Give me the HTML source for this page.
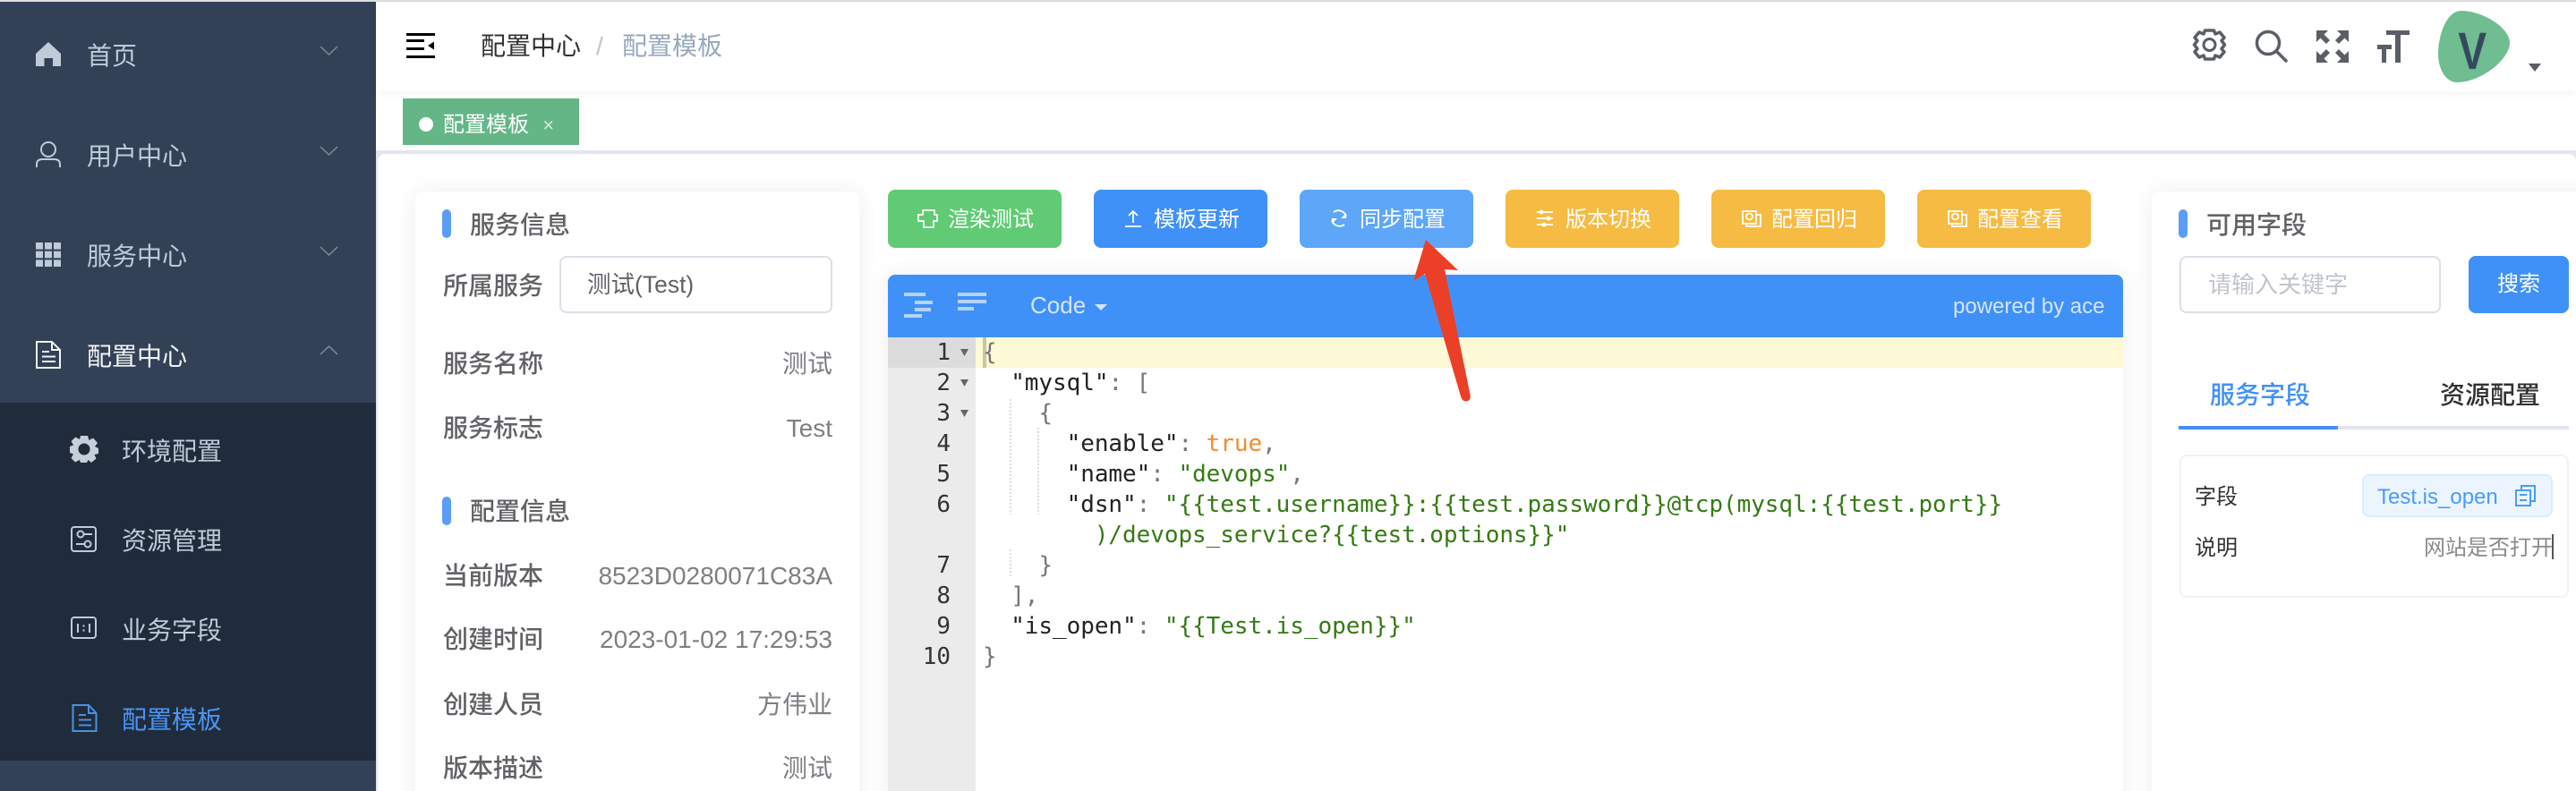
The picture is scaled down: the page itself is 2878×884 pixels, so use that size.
<!DOCTYPE html>
<html lang="zh">
<head>
<meta charset="utf-8">
<title>配置模板</title>
<style>
html,body{margin:0;padding:0;width:2878px;height:884px;overflow:hidden;background:#fff}
body{position:relative;font-family:"Liberation Sans","Noto Sans CJK SC",sans-serif;font-size:28px;color:#606266}
div,span.t{position:absolute}
.t{position:absolute;white-space:nowrap;line-height:40px;height:40px;margin-top:2px}
.t0{margin-top:0}
.side{color:#bfcbd9}
.lab{color:#606266;font-weight:500;font-size:28px}
.val{color:#7d7f84;font-size:28px}
.ttl{color:#606266;font-weight:500}
.bar{width:10px;height:32px;border-radius:5px;background:#5a9cf8}
.btn{top:212px;width:194px;height:65px;border-radius:8px}
.bt{top:224px;color:#fff;font-size:24px}
.panel{background:#fff;border-radius:8px;box-shadow:0 0 26px rgba(20,20,60,.07)}
.c{position:absolute;white-space:pre;font-family:"DejaVu Sans Mono","Liberation Mono",monospace;font-size:26px;letter-spacing:-.05px;line-height:34px;height:34px;left:1098px;color:#222}
.n{position:absolute;font-family:"DejaVu Sans Mono","Liberation Mono",monospace;font-size:26px;line-height:34px;height:34px;width:60px;left:1002px;text-align:right;color:#333}
.p{color:#777}.s{color:#357a14}.o{color:#f08d2e}
.g{width:2px;background:repeating-linear-gradient(to bottom,#dcdcdc 0 2px,transparent 2px 4px)}
svg{position:absolute;left:0;top:0}
</style>
</head>
<body>
<div style="left:0;top:0;width:2878px;height:2px;background:#dedede"></div>

<!-- main backdrop -->
<div style="left:420px;top:2px;width:2458px;height:100px;background:#fff;box-shadow:0 2px 8px rgba(0,21,41,.05);z-index:2"></div>
<div style="left:420px;top:102px;width:2458px;height:66px;background:#fff"></div>
<div style="left:420px;top:168px;width:2458px;height:716px;background:#e3e6f0"></div>
<div style="left:422px;top:172px;width:2456px;height:712px;background:#fff;border-radius:8px 8px 0 0;overflow:hidden">
  <div class="panel" style="left:42px;top:42px;width:496px;height:700px"></div>
  <div class="panel" style="left:570px;top:135px;width:1380px;height:600px;border-radius:8px 8px 0 0"></div>
  <div class="panel" style="left:1982px;top:42px;width:500px;height:700px"></div>
</div>

<!-- sidebar -->
<div style="left:0;top:2px;width:420px;height:882px;background:#324155"></div>
<div style="left:0;top:450px;width:420px;height:400px;background:#202c3b"></div>
<span class="t side" style="left:97px;top:41px">首页</span>
<span class="t side" style="left:97px;top:153px">用户中心</span>
<span class="t side" style="left:97px;top:265px">服务中心</span>
<span class="t" style="left:97px;top:377px;color:#f2f4f6">配置中心</span>
<span class="t side" style="left:136px;top:483px">环境配置</span>
<span class="t side" style="left:136px;top:583px">资源管理</span>
<span class="t side" style="left:136px;top:683px">业务字段</span>
<span class="t" style="left:136px;top:783px;color:#4a95f5">配置模板</span>

<!-- header text -->
<span class="t t0" style="left:537px;top:32px;color:#303133;z-index:3">配置中心</span>
<span class="t t0" style="left:666px;top:32px;color:#c0c4cc;z-index:3">/</span>
<span class="t t0" style="left:695px;top:32px;color:#97a8be;z-index:3">配置模板</span>

<!-- tag -->
<div style="left:450px;top:110px;width:197px;height:52px;background:#64b687"></div>
<div style="left:468px;top:131px;width:16px;height:16px;border-radius:50%;background:#fff"></div>
<span class="t" style="left:495px;top:118px;font-size:24px;color:#fff">配置模板</span>

<!-- left panel -->
<div class="bar" style="left:494px;top:234px"></div>
<span class="t ttl" style="left:525px;top:230px">服务信息</span>
<span class="t lab" style="left:495px;top:298px">所属服务</span>
<div style="left:625px;top:286px;width:301px;height:60px;border:2px solid #dcdfe6;border-radius:8px;background:#fff"></div>
<span class="t t0" style="left:656px;top:298px;font-size:26.500px;color:#606266">测试(Test)</span>
<span class="t lab" style="left:495px;top:385px">服务名称</span>
<span class="t val" style="right:1948px;top:385px">测试</span>
<span class="t lab" style="left:495px;top:457px">服务标志</span>
<span class="t val" style="right:1948px;top:457px">Test</span>
<div class="bar" style="left:494px;top:555px"></div>
<span class="t ttl" style="left:525px;top:550px">配置信息</span>
<span class="t lab" style="left:495px;top:622px">当前版本</span>
<span class="t val" style="right:1948px;top:622px">8523D0280071C83A</span>
<span class="t lab" style="left:495px;top:693px">创建时间</span>
<span class="t val" style="right:1948px;top:693px">2023-01-02 17:29:53</span>
<span class="t lab" style="left:495px;top:766px">创建人员</span>
<span class="t val" style="right:1948px;top:766px">方伟业</span>
<span class="t lab" style="left:495px;top:837px">版本描述</span>
<span class="t val" style="right:1948px;top:837px">测试</span>

<!-- buttons -->
<div class="btn" style="left:992px;background:#60cb74"></div>
<div class="btn" style="left:1222px;background:#4091f7"></div>
<div class="btn" style="left:1452px;background:#5ea6f8"></div>
<div class="btn" style="left:1682px;background:#f6bb42"></div>
<div class="btn" style="left:1912px;background:#f6bb42"></div>
<div class="btn" style="left:2142px;background:#f6bb42"></div>
<span class="t bt" style="left:1059px">渲染测试</span>
<span class="t bt" style="left:1289px">模板更新</span>
<span class="t bt" style="left:1519px">同步配置</span>
<span class="t bt" style="left:1749px">版本切换</span>
<span class="t bt" style="left:1979px">配置回归</span>
<span class="t bt" style="left:2209px">配置查看</span>

<!-- editor -->
<div style="left:992px;top:307px;width:1380px;height:70px;background:#4091f7;border-radius:8px 8px 0 0"></div>
<div style="left:992px;top:377px;width:1380px;height:507px;background:#fff"></div>
<div style="left:992px;top:377px;width:98px;height:507px;background:#ebebeb"></div>
<div style="left:992px;top:377px;width:98px;height:34px;background:#dcdcdc"></div>
<div style="left:1090px;top:377px;width:1282px;height:34px;background:#fef9d6"></div>
<div style="left:1098px;top:377px;width:4px;height:34px;background:#cbc5a3"></div>
<span class="t t0" style="left:1151px;top:321px;font-size:26px;color:#d3e5fd">Code</span>
<span class="t t0" style="left:2182px;top:323px;font-size:24px;color:#d3e5fd">powered by ace</span>

<div class="g" style="left:1128px;top:446px;height:129px"></div>
<div class="g" style="left:1128px;top:614px;height:30px"></div>
<div class="g" style="left:1159px;top:478px;height:97px"></div>

<span class="n" style="top:377px">1</span>
<span class="n" style="top:411px">2</span>
<span class="n" style="top:445px">3</span>
<span class="n" style="top:479px">4</span>
<span class="n" style="top:513px">5</span>
<span class="n" style="top:547px">6</span>
<span class="n" style="top:615px">7</span>
<span class="n" style="top:649px">8</span>
<span class="n" style="top:683px">9</span>
<span class="n" style="top:717px">10</span>

<span class="c p" style="top:377px">{</span>
<span class="c" style="top:411px">  "mysql"<span class="p">: [</span></span>
<span class="c p" style="top:445px">    {</span>
<span class="c" style="top:479px">      "enable"<span class="p">: </span><span class="o">true</span><span class="p">,</span></span>
<span class="c" style="top:513px">      "name"<span class="p">: </span><span class="s">"devops"</span><span class="p">,</span></span>
<span class="c" style="top:547px">      "dsn"<span class="p">: </span><span class="s">"{{test.username}}:{{test.password}}@tcp(mysql:{{test.port}}</span></span>
<span class="c s" style="top:581px">        )/devops_service?{{test.options}}"</span>
<span class="c p" style="top:615px">    }</span>
<span class="c p" style="top:649px">  ],</span>
<span class="c" style="top:683px">  "is_open"<span class="p">: </span><span class="s">"{{Test.is_open}}"</span></span>
<span class="c p" style="top:717px">}</span>

<!-- right panel -->
<div class="bar" style="left:2434px;top:234px"></div>
<span class="t ttl" style="left:2465px;top:230px">可用字段</span>
<div style="left:2435px;top:286px;width:288px;height:60px;border:2px solid #dcdfe6;border-radius:8px;background:#fff"></div>
<span class="t t0" style="left:2467px;top:298px;font-size:26px;color:#c0c4cc">请输入关键字</span>
<div style="left:2758px;top:286px;width:112px;height:64px;background:#4091f7;border-radius:8px"></div>
<span class="t t0" style="left:2790px;top:298px;font-size:24px;color:#fff">搜索</span>
<span class="t" style="left:2469px;top:420px;color:#4091f7;font-weight:500">服务字段</span>
<span class="t" style="left:2726px;top:420px;color:#303133;font-weight:500">资源配置</span>
<div style="left:2434px;top:476px;width:436px;height:4px;background:#dfe4ed"></div>
<div style="left:2434px;top:476px;width:178px;height:4px;background:#4091f7"></div>
<div style="left:2435px;top:508px;width:431px;height:156px;border:2px solid #f1f2f4;border-radius:8px;background:#fff"></div>
<span class="t" style="left:2452px;top:534px;font-size:24px;color:#303133">字段</span>
<div style="left:2639px;top:530px;width:209px;height:44px;background:#ecf5ff;border:2px solid #d9ecff;border-radius:8px"></div>
<span class="t" style="left:2656px;top:534px;font-size:24px;color:#4a9bfb">Test.is_open</span>
<span class="t" style="left:2452px;top:591px;font-size:24px;color:#303133">说明</span>
<span class="t" style="right:26px;top:591px;font-size:24px;color:#8b8b8b">网站是否打开</span>
<div style="left:2851px;top:597px;width:2px;height:28px;background:#555"></div>

<!-- icons & arrow overlay -->
<svg width="2878" height="884" viewBox="0 0 2878 884" style="z-index:5">
  <!-- tag close -->
  <path d="M608.500 135.500L617 144M617 135.500L608.500 144" stroke="#e8f4ec" stroke-width="1.300" fill="none"/>
  <!-- sidebar icons -->
  <path d="M54 47L68 60V74H59V65H49.500V74H40V60Z" fill="#bfcbd9"/>
  <g fill="none" stroke="#bfcbd9" stroke-width="2">
    <circle cx="54" cy="167" r="8"/>
    <path d="M41 187V184Q41 178 47 178H61Q67 178 67 184V187"/>
  </g>
  <g fill="#bfcbd9">
    <rect x="40" y="271" width="8" height="7.600"/><rect x="50" y="271" width="8" height="7.600"/><rect x="60" y="271" width="8" height="7.600"/>
    <rect x="40" y="280.700" width="8" height="7.600"/><rect x="50" y="280.700" width="8" height="7.600"/><rect x="60" y="280.700" width="8" height="7.600"/>
    <rect x="40" y="290.400" width="8" height="7.600"/><rect x="50" y="290.400" width="8" height="7.600"/><rect x="60" y="290.400" width="8" height="7.600"/>
  </g>
  <g fill="none" stroke="#f2f4f6" stroke-width="2">
    <path d="M41 382H58L67 391V411H41Z"/><path d="M58 382V391H67"/>
    <path d="M47 393H55M47 398.500H62M47 404H62"/>
  </g>
  <g fill="none" stroke="#7f8b9b" stroke-width="1.500">
    <path d="M358 52L367.500 61L377 52"/><path d="M358 164L367.500 173L377 164"/>
    <path d="M358 276L367.500 285L377 276"/><path d="M358 396L367.500 387L377 396"/>
  </g>
  <!-- sub menu icons -->
  <g fill="#c6ced9">
    <path fill-rule="evenodd" d="M90 487H98L99.500 492L104 489.500L109 495L106 499L110 501V507L105.500 508L107.500 512.500L102 517L98.500 514L97 517H90L89 514L84 516.500L79.500 512L82 507.500L78 506V499L82 497.500L79.500 493L84.500 488.500L89 491ZM94 495.500A6.500 6.500 0 1 0 94 508.500A6.500 6.500 0 1 0 94 495.500Z"/>
  </g>
  <g fill="none" stroke="#bfcbd9" stroke-width="2">
    <rect x="80" y="589" width="27" height="27" rx="3"/>
    <circle cx="90" cy="597" r="3.500"/><path d="M93.500 597H103"/>
    <circle cx="98" cy="608" r="3.500"/><path d="M85 608H94.500"/>
    <rect x="80" y="690" width="27" height="23" rx="3"/>
    <path d="M87 697V707M100 697V707M93.500 698.500V700.500M93.500 703.500V705.500"/>
  </g>
  <g fill="none" stroke="#4a90e8" stroke-width="2">
    <path d="M81.500 788H99L107.500 797V817H81.500Z"/><path d="M99 788V797H107.500"/>
    <path d="M88 799H96M88 804.500H102M88 810.500H102"/>
  </g>
  <!-- hamburger -->
  <g fill="#000">
    <rect x="454" y="37" width="32" height="3"/><rect x="454" y="44" width="20" height="3"/>
    <rect x="454" y="53" width="20" height="3"/><rect x="454" y="62" width="32" height="3"/>
    <path d="M478 51L485 46.500V55.500Z"/>
  </g>
  <!-- right header icons -->
  <g fill="none" stroke="#5a5e66">
    <circle cx="2468.500" cy="50" r="6.500" stroke-width="3"/>
    <path stroke-width="3.500" d="M2463.500 34H2473.500L2475 38L2480 36L2485 42L2482 45.500L2485.500 50L2482 54.500L2485 58L2480 64L2475 62L2473.500 66H2463.500L2462 62L2457 64L2452 58L2455 54.500L2451.500 50L2455 45.500L2452 42L2457 36L2462 38Z" stroke-linejoin="round"/>
    <circle cx="2534" cy="48" r="12.500" stroke-width="3.500"/>
    <path d="M2543 57L2554 68" stroke-width="3.500" stroke-linecap="round"/>
  </g>
  <g fill="#5a5e66">
    <path d="M2588 34H2601L2596.500 38.500L2603 45L2599 49L2592.500 42.500L2588 47Z"/>
    <path d="M2624 34H2611L2615.500 38.500L2609 45L2613 49L2619.500 42.500L2624 47Z"/>
    <path d="M2588 70H2601L2596.500 65.500L2603 59L2599 55L2592.500 61.500L2588 57Z"/>
    <path d="M2624 70H2611L2615.500 65.500L2609 59L2613 55L2619.500 61.500L2624 57Z"/>
    <rect x="2666" y="34" width="26" height="5"/><rect x="2676" y="34" width="6" height="36"/>
    <rect x="2656" y="50" width="16" height="5"/><rect x="2661" y="50" width="5" height="20"/>
    <path d="M2825 71H2839L2832 80Z"/>
  </g>
  <path d="M2750 12C2772 12 2804 30 2804 48C2804 66 2772 92 2745 92C2733 92 2724 78 2724 60C2724 40 2733 12 2750 12Z" fill="#6fbd90"/>
  <text x="2762.500" y="77" text-anchor="middle" font-family="'Liberation Sans',sans-serif" font-weight="700" font-size="58" fill="#35495e" transform="translate(497 0) scale(.82 1)">V</text>
  <!-- editor toolbar icons -->
  <g fill="#b5d3fb">
    <rect x="1010" y="327" width="24" height="4"/><rect x="1022" y="336" width="20" height="4"/>
    <rect x="1022" y="344" width="18" height="4"/><rect x="1010" y="351" width="20" height="4"/>
    <rect x="1070" y="327" width="32" height="4"/><rect x="1070" y="335" width="32" height="4"/>
    <rect x="1070" y="343" width="18" height="4"/>
  </g>
  <path d="M1223 340H1237L1230 347Z" fill="#d3e5fd"/>
  <!-- fold arrows -->
  <g fill="#666">
    <path d="M1073 390H1082L1077.500 398Z"/><path d="M1073 424H1082L1077.500 432Z"/><path d="M1073 458H1082L1077.500 466Z"/>
  </g>
  <!-- button icons -->
  <g fill="none" stroke="#fff" stroke-width="1.800">
    <path d="M1031 235H1044V240H1047V247H1043V254H1032V247H1026V240H1031Z"/>
    <path d="M1266 249V236M1261 241L1266 236L1271 241"/><path d="M1257 253H1275"/>
    <path d="M1490 237A9 9 0 0 1 1504 242M1502 251A9 9 0 0 1 1488 246"/>
    <path d="M1717 237H1735M1717 244H1735M1717 251H1735"/>
    <rect x="1947" y="236" width="15" height="14"/><path d="M1962 240H1967V253H1951V250"/><circle cx="1954.500" cy="242" r="3.500"/>
    <rect x="2177" y="236" width="15" height="14"/><path d="M2192 240H2197V253H2181V250"/><circle cx="2184.500" cy="242" r="3.500"/>
  </g>
  <g fill="#fff"><circle cx="1722" cy="237" r="2.500"/><circle cx="1730" cy="244" r="2.500"/><circle cx="1725" cy="251" r="2.500"/>
    <path d="M1504 238V244H1498ZM1488 250V244H1494Z"/></g>
  <!-- copy icon -->
  <g fill="none" stroke="#4a9bfb" stroke-width="2">
    <rect x="2811" y="548" width="16" height="17"/><path d="M2817 548V543H2832V560H2827"/><path d="M2815 553H2823M2815 559H2823"/>
  </g>
  <!-- red arrow -->
  <path d="M1593 268L1629 302L1614 301L1642.500 441Q1644 448 1638 448.500Q1634 449 1632 443L1592 306L1579 314Z" fill="#eb4027"/>
</svg>
</body>
</html>
